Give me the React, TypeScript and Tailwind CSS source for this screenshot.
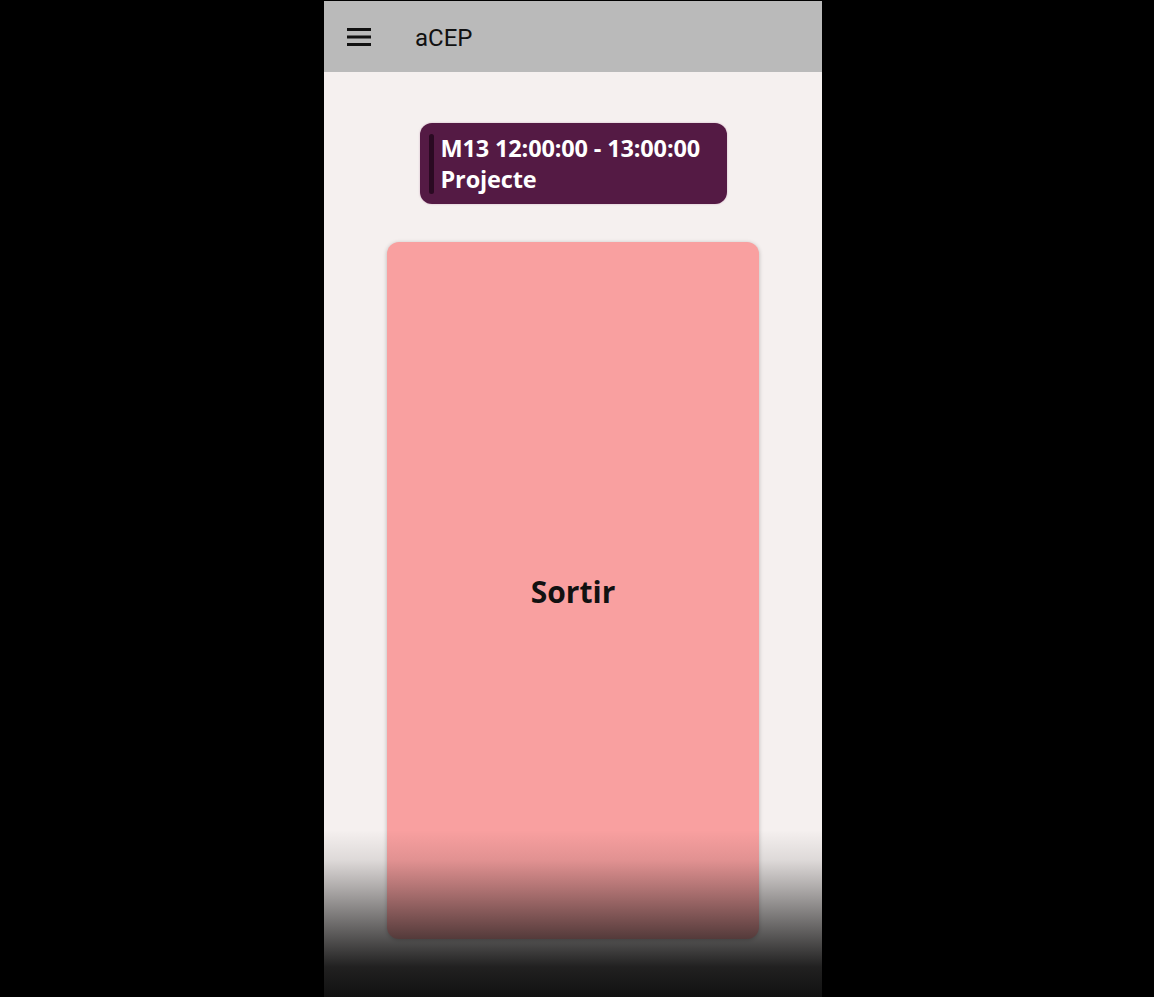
export default function App() {
  return (
    <div className="min-h-[997px] w-full bg-black flex pl-[324px]">
      <div className="relative w-[498px] h-[997px] bg-[#f5f0ef] flex flex-col overflow-hidden border-t border-black">
        {/* Barra superior */}
        <header className="h-[71px] bg-[#bababa] flex items-center shrink-0">
          <button className="ml-[23px] w-[24px] h-[24px] flex items-center justify-center" aria-label="Menu">
            <svg width="24" height="18" viewBox="0 0 24 18">
              <path d="M0 1.5h24M0 9h24M0 16.5h24" stroke="#111" strokeWidth="2.8" />
            </svg>
          </button>
          <h1 className="ml-[44px] mt-[2px] text-[24px] text-[#111] font-['Roboto',sans-serif]">aCEP</h1>
        </header>

        {/* Contingut */}
        <main className="flex flex-col items-center pt-[51px]">
          <div className="w-[307px] h-[81px] bg-[#541a44] rounded-[12px] flex items-center px-[9px] shadow-[0_0_2px_rgba(180,120,160,0.6)]">
            <div className="w-[5px] h-[60px] bg-[#2a0a22] rounded-sm" />
            <div className="ml-[7px] text-white font-bold text-[23.5px] leading-[31px] tracking-[-0.15px] font-['Open_Sans',sans-serif]">
              <div>M13 12:00:00 - 13:00:00</div>
              <div>Projecte</div>
            </div>
          </div>

          <button className="mt-[38px] w-[372px] h-[697px] bg-[#f9a0a0] rounded-[12px] shadow-[0_1px_4px_rgba(0,0,0,0.25)] flex items-center justify-center">
            <span className="mt-[2px] text-[30px] font-bold text-[#111] font-['Open_Sans',sans-serif]">Sortir</span>
          </button>
        </main>

        {/* Degradat inferior */}
        <div className="absolute left-0 right-0 bottom-0 h-[167px] pointer-events-none bg-[linear-gradient(to_bottom,rgba(17,17,17,0)_0%,rgba(17,17,17,0.1)_18%,rgba(17,17,17,0.3)_34%,rgba(17,17,17,0.72)_66%,rgba(17,17,17,0.93)_82%,rgba(17,17,17,1)_100%)]" />
      </div>
    </div>
  );
}
